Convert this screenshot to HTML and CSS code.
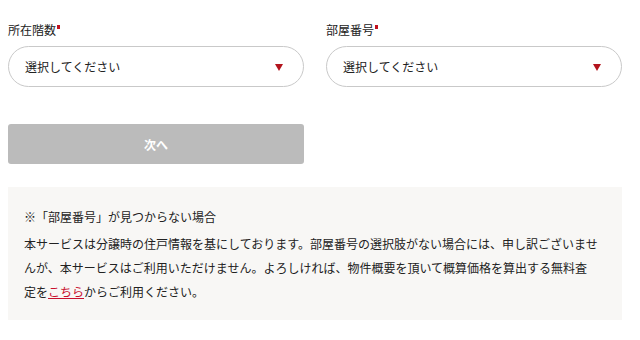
FILE: index.html
```html
<!DOCTYPE html>
<html lang="ja">
<head>
<meta charset="utf-8">
<link rel="stylesheet" href="styles.css">
</head>
<body>
<main class="page">
  <div class="fields">
    <div class="field">
      <div class="field-label">所在階数<span class="req"></span></div>
      <div class="select"><span class="select-text">選択してください</span><span class="caret"></span></div>
    </div>
    <div class="field">
      <div class="field-label">部屋番号<span class="req"></span></div>
      <div class="select"><span class="select-text">選択してください</span><span class="caret"></span></div>
    </div>
  </div>
  <div class="actions">
    <button class="next" type="button">次へ</button>
  </div>
  <section class="note">
    <p class="note-title">※「部屋番号」が見つからない場合</p>
    <p class="note-body">本サービスは分譲時の住戸情報を基にしております。部屋番号の選択肢がない場合には、申し訳ございませんが、本サービスはご利用いただけません。よろしければ、物件概要を頂いて概算価格を算出する無料査<br>定を<a class="link" href="#">こちら</a>からご利用ください。</p>
  </section>
</main>
</body>
</html>
```

FILE: styles.css
```css
html, body {
  margin: 0;
  padding: 0;
  background: #ffffff;
}
body {
  font-family: "Noto Sans CJK JP", "Noto Sans", sans-serif;
  color: #222222;
  font-size: 12px;
}
.page {
  width: 614px;
  padding: 20px 8px 0 8px;
}
.fields {
  display: grid;
  grid-template-columns: 296px 296px;
  column-gap: 22px;
}
.field {
  display: flex;
  flex-direction: column;
  gap: 6px;
}
.field-label {
  font-size: 12px;
  line-height: 20px;
  display: flex;
  align-items: flex-start;
}
.req {
  width: 3px;
  height: 4px;
  background: #c1121f;
  margin: 5px 0 0 1px;
}
.select {
  height: 41px;
  box-sizing: border-box;
  border: 1px solid #c9c9c9;
  border-radius: 21px;
  display: flex;
  align-items: center;
  justify-content: space-between;
  padding: 0 20px 0 16px;
  background: #fff;
}
.select-text {
  font-size: 12px;
}
.caret {
  width: 0;
  height: 0;
  margin-top: 1px;
  border-left: 4.5px solid transparent;
  border-right: 4.5px solid transparent;
  border-top: 7px solid #b3141d;
}
.actions {
  margin-top: 37px;
}
.next {
  width: 296px;
  height: 40px;
  border: none;
  border-radius: 3px;
  background: #bbbbbb;
  color: #ffffff;
  font-family: inherit;
  font-size: 12px;
  font-weight: 700;
}
.note {
  margin-top: 23px;
  background: #f8f7f5;
  padding: 18px 16px 16px 16px;
}
.note p {
  margin: 0;
}
.note-title {
  line-height: 24px;
  margin-bottom: 3px !important;
}
.note-body {
  line-height: 24px;
}
.link {
  color: #c8102e;
  text-decoration: underline;
}
```
